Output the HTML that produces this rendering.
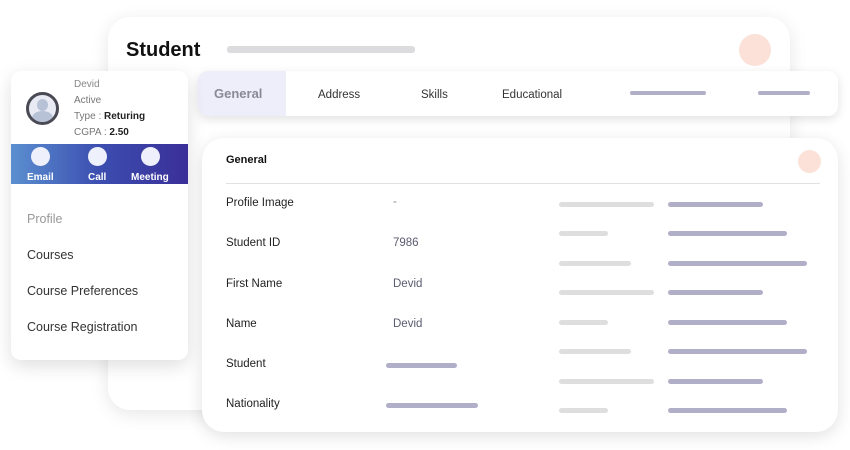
<!DOCTYPE html>
<html><head><style>
*{margin:0;padding:0;box-sizing:border-box}
body{width:850px;height:450px;background:#fff;position:relative;overflow:hidden;font-family:"Liberation Sans",sans-serif}
.a{position:absolute}
.card{position:absolute;background:#fff;box-shadow:0 4px 18px rgba(0,0,0,0.10)}
.t{position:absolute;white-space:nowrap}
.g{position:absolute;height:5px;border-radius:3px;background:#dedede}
.p{position:absolute;height:5px;border-radius:3px;background:#b1aec8}
</style></head><body>
<div class="card" style="left:108px;top:17px;width:682px;height:393px;border-radius:22px"></div>
<div class="t" style="left:126px;top:39px;font-size:20px;font-weight:bold;color:#111">Student</div>
<div class="g" style="left:227px;top:46px;width:188px;height:7px;background:#dcdcdf"></div>
<div class="a" style="left:739px;top:34px;width:32px;height:32px;border-radius:50%;background:#fbe1d8"></div>

<div class="card" style="left:198px;top:71px;width:640px;height:45px;border-radius:10px;box-shadow:0 3px 10px rgba(0,0,0,0.12)"></div>
<div class="a" style="left:198px;top:71px;width:88px;height:45px;border-radius:10px 0 0 10px;background:#eeeefa"></div>
<div class="t" style="left:214px;top:86px;font-size:13px;font-weight:bold;color:#8a8a95">General</div>
<div class="t" style="left:318px;top:89px;font-size:11.5px;color:#333">Address</div>
<div class="t" style="left:421px;top:89px;font-size:11.5px;color:#333">Skills</div>
<div class="t" style="left:502px;top:89px;font-size:11.5px;color:#333">Educational</div>
<div class="p" style="left:630px;top:91px;width:76px;height:4px"></div>
<div class="p" style="left:758px;top:91px;width:52px;height:4px"></div>

<div class="card" style="left:11px;top:71px;width:177px;height:289px;border-radius:10px;box-shadow:0 6px 18px rgba(0,0,0,0.13)"></div>
<div class="a" style="left:26px;top:92px;width:33px;height:33px;border-radius:50%;border:3px solid #4a4a55;background:#e8ebf3;overflow:hidden">
<div class="a" style="left:8px;top:4px;width:11px;height:12px;border-radius:50%;background:#b8c2d6"></div>
<div class="a" style="left:3px;top:16px;width:21px;height:14px;border-radius:50% 50% 0 0;background:#b8c2d6"></div></div>
<div class="t" style="left:74px;top:79px;font-size:10px;color:#888">Devid</div>
<div class="t" style="left:74px;top:95px;font-size:10px;color:#777">Active</div>
<div class="t" style="left:74px;top:111px;font-size:10px;color:#777">Type : <b style="color:#222">Returing</b></div>
<div class="t" style="left:74px;top:127px;font-size:10px;color:#777">CGPA : <b style="color:#222">2.50</b></div>
<div class="a" style="left:11px;top:144px;width:177px;height:40px;background:linear-gradient(90deg,#5b8fd0,#3c4eb0 50%,#3a2f98)"></div>
<div class="a" style="left:31px;top:147px;width:19px;height:19px;border-radius:50%;background:#eef0fb"></div>
<div class="a" style="left:88px;top:147px;width:19px;height:19px;border-radius:50%;background:#eef0fb"></div>
<div class="a" style="left:141px;top:147px;width:19px;height:19px;border-radius:50%;background:#eef0fb"></div>
<div class="t" style="left:27px;top:172px;font-size:10px;font-weight:bold;color:#fff">Email</div>
<div class="t" style="left:88px;top:172px;font-size:10px;font-weight:bold;color:#fff">Call</div>
<div class="t" style="left:131px;top:172px;font-size:10px;font-weight:bold;color:#fff">Meeting</div>
<div class="t" style="left:27px;top:212px;font-size:12.5px;color:#999">Profile</div>
<div class="t" style="left:27px;top:248px;font-size:12.5px;color:#333">Courses</div>
<div class="t" style="left:27px;top:284px;font-size:12.5px;color:#333">Course Preferences</div>
<div class="t" style="left:27px;top:320px;font-size:12.5px;color:#333">Course Registration</div>

<div class="card" style="left:202px;top:138px;width:636px;height:294px;border-radius:22px;box-shadow:0 4px 16px rgba(0,0,0,0.12)"></div>
<div class="t" style="left:226px;top:154px;font-size:11px;font-weight:bold;color:#111">General</div>
<div class="a" style="left:798px;top:150px;width:23px;height:23px;border-radius:50%;background:#fbe1d8"></div>
<div class="a" style="left:226px;top:183px;width:594px;height:1px;background:#e2e2e6"></div>
<div class="t" style="left:226px;top:197px;font-size:11.5px;color:#222">Profile Image</div>
<div class="t" style="left:226px;top:237px;font-size:11.5px;color:#222">Student ID</div>
<div class="t" style="left:226px;top:278px;font-size:11.5px;color:#222">First Name</div>
<div class="t" style="left:226px;top:318px;font-size:11.5px;color:#222">Name</div>
<div class="t" style="left:226px;top:358px;font-size:11.5px;color:#222">Student</div>
<div class="t" style="left:226px;top:398px;font-size:11.5px;color:#222">Nationality</div>
<div class="t" style="left:393px;top:196px;font-size:11.5px;color:#888">-</div>
<div class="t" style="left:393px;top:237px;font-size:11.5px;color:#5a5a70">7986</div>
<div class="t" style="left:393px;top:278px;font-size:11.5px;color:#5a5a70">Devid</div>
<div class="t" style="left:393px;top:318px;font-size:11.5px;color:#5a5a70">Devid</div>
<div class="p" style="left:386px;top:363px;width:71px"></div>
<div class="p" style="left:386px;top:403px;width:92px"></div>

<div class="g" style="left:559px;top:202px;width:95px"></div><div class="p" style="left:668px;top:202px;width:95px"></div>
<div class="g" style="left:559px;top:231px;width:49px"></div><div class="p" style="left:668px;top:231px;width:119px"></div>
<div class="g" style="left:559px;top:261px;width:72px"></div><div class="p" style="left:668px;top:261px;width:139px"></div>
<div class="g" style="left:559px;top:290px;width:95px"></div><div class="p" style="left:668px;top:290px;width:95px"></div>
<div class="g" style="left:559px;top:320px;width:49px"></div><div class="p" style="left:668px;top:320px;width:119px"></div>
<div class="g" style="left:559px;top:349px;width:72px"></div><div class="p" style="left:668px;top:349px;width:139px"></div>
<div class="g" style="left:559px;top:379px;width:95px"></div><div class="p" style="left:668px;top:379px;width:95px"></div>
<div class="g" style="left:559px;top:408px;width:49px"></div><div class="p" style="left:668px;top:408px;width:119px"></div>
</body></html>
